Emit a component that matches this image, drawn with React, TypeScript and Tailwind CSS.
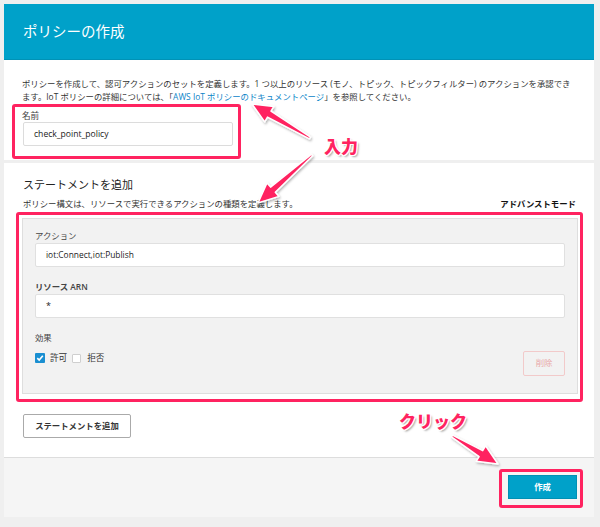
import React from "react";

const PINK = "#ff2360";

function arrowPoints(x1: number, y1: number, x2: number, y2: number, headLen = 20, headW = 18, tailW = 2, shaftW = 7) {
  const dx = x2 - x1;
  const dy = y2 - y1;
  const len = Math.hypot(dx, dy);
  const ux = dx / len;
  const uy = dy / len;
  const nx = -uy;
  const ny = ux;
  const bx = x2 - ux * headLen;
  const by = y2 - uy * headLen;
  const p = (x: number, y: number) => `${x.toFixed(1)},${y.toFixed(1)}`;
  return [
    p(x1 + (nx * tailW) / 2, y1 + (ny * tailW) / 2),
    p(bx + (nx * shaftW) / 2, by + (ny * shaftW) / 2),
    p(bx + (nx * headW) / 2, by + (ny * headW) / 2),
    p(x2, y2),
    p(bx - (nx * headW) / 2, by - (ny * headW) / 2),
    p(bx - (nx * shaftW) / 2, by - (ny * shaftW) / 2),
    p(x1 - (nx * tailW) / 2, y1 - (ny * tailW) / 2),
  ].join(" ");
}

function Arrows() {
  const arrows = [
    [310, 138, 252, 104],
    [312, 155, 258, 203],
    [452, 436, 498, 464],
  ];
  return (
    <svg className="absolute left-0 top-0 pointer-events-none" width={600} height={527} viewBox="0 0 600 527">
      <defs>
        <filter id="sh" x="-20%" y="-20%" width="140%" height="140%">
          <feDropShadow dx="1" dy="1.5" stdDeviation="1" floodColor="#000" floodOpacity="0.3" />
        </filter>
      </defs>
      {arrows.map((a, i) => (
        <polygon
          key={i}
          points={arrowPoints(a[0], a[1], a[2], a[3])}
          fill={PINK}
          stroke="#fff"
          strokeWidth={1.5}
          strokeLinejoin="round"
          filter="url(#sh)"
        />
      ))}
    </svg>
  );
}

const annot =
  "absolute text-[17px] leading-[20px] font-black text-[#ff2360] font-['Noto_Sans_CJK_JP',sans-serif] [text-shadow:1px_1px_0_#fff,-1px_-1px_0_#fff,1px_-1px_0_#fff,-1px_1px_0_#fff,0_1px_0_#fff,1px_0_0_#fff,2px_2px_2px_rgba(0,0,0,0.35)]";

export default function App() {
  return (
    <div className="relative w-[600px] h-[527px] bg-[#efefef] overflow-hidden font-['Open_Sans','Noto_Sans_CJK_JP',sans-serif] text-[#333]">
      <div className="ml-[4px] mt-[4px] w-[590px] h-[513px] flex flex-col bg-white">
        {/* header */}
        <div className="h-[56px] bg-[#00a1c9] flex items-center pl-[19px] border-b border-[#0092b6]">
          <h1 className="text-[14.5px] text-white leading-none font-['Noto_Sans_CJK_JP',sans-serif]">ポリシーの作成</h1>
        </div>

        {/* section 1 */}
        <div className="pt-[18px] pb-[14px] pl-[18px] pr-[4px]">
          <div className="text-[8.4px] leading-[12.5px] text-[#333]">
            <div className="whitespace-nowrap">
              ポリシーを作成して、認可アクションのセットを定義します。1 つ以上のリソース (モノ、トピック、トピックフィルター) のアクションを承認でき
            </div>
            <div className="whitespace-nowrap">
              ます。IoT ポリシーの詳細については、「<span className="text-[#0a84c8]">AWS IoT ポリシーのドキュメントページ</span>」を参照してください。
            </div>
          </div>
          <div className="mt-[7px] text-[8.6px] leading-[12px] text-[#444]">名前</div>
          <div className="w-[210px] h-[24px] border border-[#dcdcdc] rounded-[2px] bg-white flex items-center pl-[10px] text-[8.6px] text-[#222] ml-[1px]">
            check_point_policy
          </div>
        </div>

        <div className="h-[3px] bg-[#efefef]" />

        {/* section 2 */}
        <div className="pt-[14px] pb-[19px] pl-[18px] pr-[16px]">
          <h2 className="text-[11px] leading-[16px] text-[#222] pl-[1px]">ステートメントを追加</h2>
          <div className="mt-[5px] flex justify-between items-center text-[8.4px] leading-[12px]">
            <span className="text-[#333] pl-[1px]">ポリシー構文は、リソースで実行できるアクションの種類を定義します。</span>
            <span className="font-bold text-[#111] text-[8.4px] pr-[2px]">アドバンストモード</span>
          </div>
          <div className="mt-[8px] bg-[#f2f2f2] border border-[#dedede] pt-[11px] pb-[17px] pl-[12px] pr-[12px]">
            <div className="text-[8.4px] leading-[12px] text-[#444]">アクション</div>
            <div className="mt-[1px] h-[24px] border border-[#e0e0e0] rounded-[2px] bg-white flex items-center pl-[10px] text-[8.4px] text-[#222]">
              iot:Connect,iot:Publish
            </div>
            <div className="mt-[14px] text-[8.4px] leading-[12px] text-[#444] font-semibold">リソース ARN</div>
            <div className="mt-[1px] h-[24px] border border-[#e0e0e0] rounded-[2px] bg-white flex items-center pl-[10px] text-[9px] text-[#222]">
              *
            </div>
            <div className="mt-[14px] text-[8.4px] leading-[12px] text-[#444]">効果</div>
            <div className="mt-[7px] flex justify-between items-start">
              <div className="mt-[2px] flex items-center text-[8.6px] leading-[10px] text-[#333]">
                <span className="w-[10px] h-[10px] bg-[#1a8fd1] rounded-[1px] flex items-center justify-center">
                  <svg width="8" height="8" viewBox="0 0 8 8">
                    <path d="M1.3 4.2 L3.2 6 L6.8 1.8" fill="none" stroke="#fff" strokeWidth="1.6" />
                  </svg>
                </span>
                <span className="ml-[5px]">許可</span>
                <span className="ml-[5px] w-[9px] h-[9px] bg-white border border-[#cfcfcf] rounded-[1px]" />
                <span className="ml-[6px]">拒否</span>
              </div>
              <div className="w-[42px] h-[25px] border border-[#f2caca] rounded-[2px] flex items-center justify-center text-[8.4px] text-[#e9a9a9]">
                削除
              </div>
            </div>
          </div>
          <div className="mt-[20px] ml-[1px] w-[108px] h-[24px] border border-[#aaaaaa] rounded-[2px] bg-white flex items-center justify-center text-[8.4px] font-semibold text-[#333]">
            ステートメントを追加
          </div>
        </div>

        {/* footer */}
        <div className="flex-1 bg-[#f5f5f5] border-t border-[#dddddd] flex justify-end pt-[17px] pr-[17px]">
          <div className="w-[69px] h-[24px] bg-[#00a1c9] border border-[#0090b4] flex items-center justify-center text-[8.4px] font-bold text-white">
            作成
          </div>
        </div>
      </div>

      {/* annotations */}
      <div className="absolute left-[12px] top-[104px] w-[229px] h-[55px] border-[3.5px] border-[#ff2360] rounded-[3px] pointer-events-none" />
      <div className="absolute left-[16px] top-[212px] w-[567px] h-[190px] border-[3.5px] border-[#ff2360] rounded-[3px] pointer-events-none" />
      <div className="absolute left-[499px] top-[469px] w-[84px] h-[39px] border-[3.5px] border-[#ff2360] rounded-[3px] pointer-events-none" />
      <Arrows />
      <div className={`${annot} left-[324px] top-[136px]`}>入力</div>
      <div className={`${annot} left-[399px] top-[411px]`}>クリック</div>
    </div>
  );
}
